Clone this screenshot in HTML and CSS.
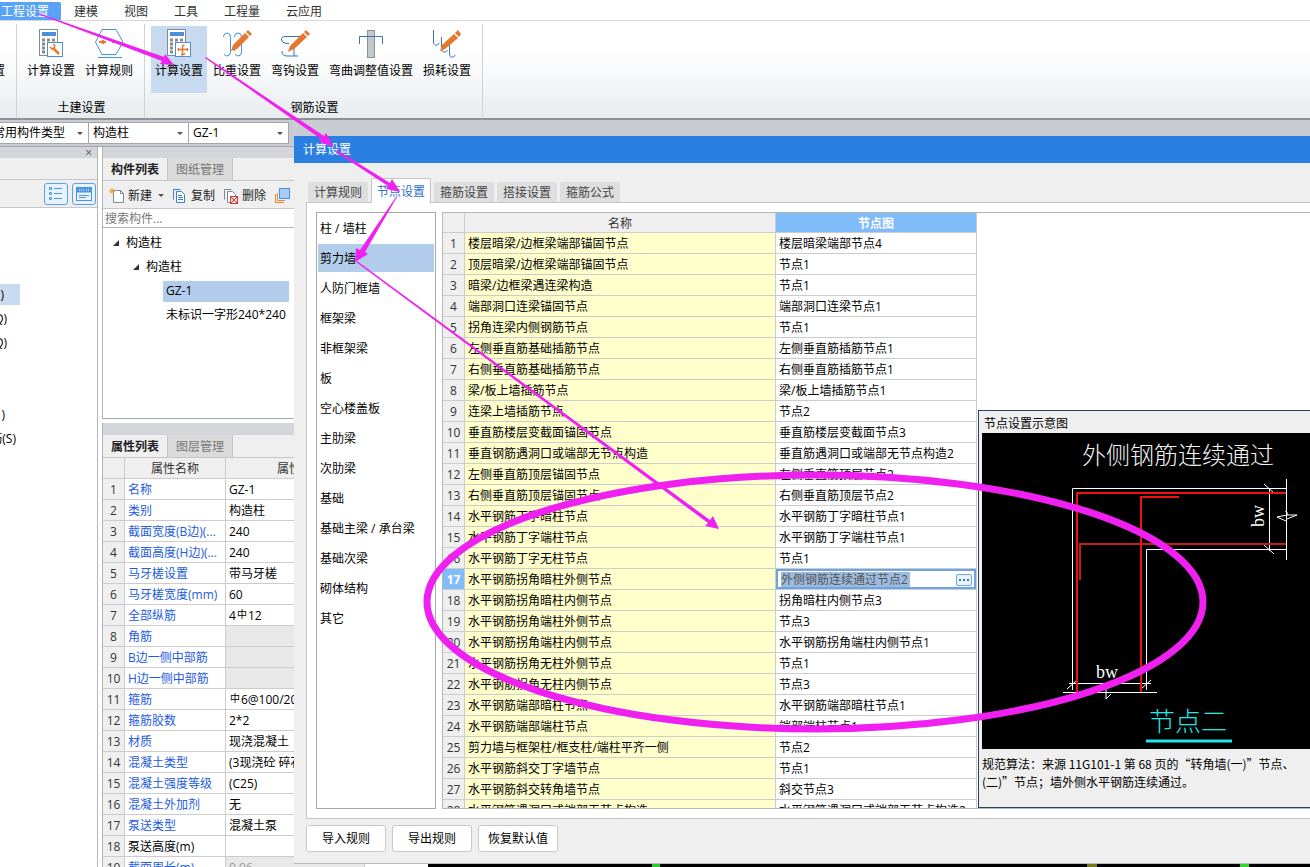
FILE: index.html
```html
<!DOCTYPE html>
<html lang="zh-CN">
<head>
    <meta charset="UTF-8">
    <meta name="viewport" content="width=device-width, initial-scale=1.0">
    <title>计算设置</title>
    <link rel="stylesheet" href="styles.css">
</head>
<body>
    <!-- 菜单 -->
    <nav class="menu">
        <a href="#" class="active">工程设置</a>
        <a href="#">建模</a>
        <a href="#">视图</a>
        <a href="#">工具</a>
        <a href="#">工程量</a>
        <a href="#">云应用</a>
    </nav>

    <!-- 功能区 -->
    <div class="ribbon">
        <div class="group group-cut">
            <div class="tools"><button class="tool">设置</button></div>
        </div>
        <div class="group">
            <div class="tools">
                <button class="tool">
                    <svg width="30" height="30" fill="none">
                        <rect x="3.500" y="0.500" width="18" height="26" fill="#fff" stroke="#7d8b99"/>
                        <rect x="6" y="3" width="14" height="4" fill="#4a8fd8"/>
                        <path d="M6 11h3m2 0h3m2 0h3M6 15h3m2 0h3m2 0h3M6 19h3m2 0h3M6 23h3" stroke="#8a8a8a" stroke-width="3"/>
                        <rect x="11.500" y="13.500" width="15" height="14" fill="#fff" stroke="#4a8fd8"/>
                        <path d="M17 19l6 6" stroke="#e8772e" stroke-width="2.500"/>
                        <path d="M14 18l2 2 2-1 1-2-2-2" stroke="#e8772e" stroke-width="1.500"/>
                    </svg>
                    计算设置
                </button>
                <button class="tool">
                    <svg width="30" height="30" fill="none">
                        <path d="M8 .5h14l7 12.500-7 12.500H8L1.500 13z" stroke="#4a8fd8"/>
                        <path d="M5 13h7M9 11v4M18 13h7" stroke="#e8772e" stroke-width="2"/>
                        <path d="M4 28.500h24" stroke="#4a8fd8"/>
                    </svg>
                    计算规则
                </button>
            </div>
            <div class="group-name">土建设置</div>
        </div>
        <div class="group">
            <div class="tools">
                <button class="tool active">
                    <svg width="30" height="30" fill="none">
                        <rect x="3.500" y="0.500" width="18" height="26" fill="#fff" stroke="#7d8b99"/>
                        <rect x="6" y="3" width="14" height="4" fill="#4a8fd8"/>
                        <path d="M6 11h3m2 0h3m2 0h3M6 15h3m2 0h3m2 0h3M6 19h3m2 0h3M6 23h3" stroke="#8a8a8a" stroke-width="3"/>
                        <rect x="11.500" y="13.500" width="15" height="14" fill="#fff" stroke="#4a8fd8"/>
                        <path d="M14 20.500h10M18.500 25v-7q0-2 2-2M14.500 19v3M23.500 19v3M17 25.500q2 1 4-1" stroke="#e8772e" stroke-width="1.500"/>
                    </svg>
                    计算设置
                </button>
                <button class="tool">
                    <svg width="30" height="30" fill="none">
                        <path d="M1.500 8q0-4 3.500-4t3.500 4v15q0 4-3.500 4-2 0-3-2M12.500 8q0-4 3.500-4t3.500 4M12.500 22v-2M19.500 14v9q0 4-3.500 4-2 0-3-2" stroke="#4a8fd8"/>
                        <path d="M9 22l2-6L23 4l4 4-12 12z" fill="#e8772e"/>
                        <path d="M24 3l2-2 4 4-2 2z" fill="#e8772e"/>
                    </svg>
                    比重设置
                </button>
                <button class="tool">
                    <svg width="30" height="30" fill="none">
                        <path d="M15 7.500H5Q1 8 1.500 11t5 3.500H9M2 22q0 5 5 5h11M14 14v13M12 7.500h8M14 14.500h6" stroke="#3a72b8"/>
                        <path d="M8 23l2-6L23 4l4 4-13 12z" fill="#e8772e"/>
                        <path d="M24 3l2-2 4 4-2 2z" fill="#e8772e"/>
                    </svg>
                    弯钩设置
                </button>
                <button class="tool tool-wide">
                    <svg width="30" height="30" fill="none">
                        <rect x="11.500" y="1.500" width="7" height="27" fill="#c3c8cc" stroke="#8a9095"/>
                        <path d="M3.500 15V7.500h23V15" stroke="#3a72b8"/>
                    </svg>
                    弯曲调整值设置
                </button>
                <button class="tool">
                    <svg width="30" height="30" fill="none">
                        <path d="M1.500 1v12q0 4 4 3l2-2M9.500 8v11q0 5 4 4l2-2M17.500 16v8q0 5 4 4l2-2" stroke="#3a72b8"/>
                        <path d="M8 22l2-6L22 5l4 4-13 11z" fill="#e8772e"/>
                        <path d="M23 4l3-3 3 4-2 3z" fill="#e8772e"/>
                    </svg>
                    损耗设置
                </button>
            </div>
            <div class="group-name">钢筋设置</div>
        </div>
    </div>

    <!-- 构件选择 -->
    <div class="selectors">
        <span class="pick pick-first"><select aria-label="构件类型"><option>常用构件类型</option></select></span>
        <span class="pick"><select aria-label="构件"><option>构造柱</option></select></span>
        <span class="pick"><select aria-label="名称"><option>GZ-1</option></select></span>
    </div>

    <div class="workspace">
        <!-- 导航栏 -->
        <aside class="navigator">
            <div class="bar"><button class="close" aria-label="关闭">×</button></div>
            <div class="caption"></div>
            <div class="view-buttons">
                <button aria-label="列表">
                    <svg width="16" height="16" fill="none" stroke="#4a96e0">
                        <path d="M1.500 1.500h2v2h-2zM1.500 6.500h2v2h-2zM1.500 11.500h2v2h-2zM6 2.500h8M6 7.500h8M6 12.500h8"/>
                    </svg>
                </button>
                <button aria-label="窗口">
                    <svg width="16" height="16" fill="none" stroke="#4a96e0">
                        <rect x="0.500" y="1.500" width="15" height="13"/>
                        <rect x="1" y="2" width="14" height="4" fill="#4a96e0"/>
                        <path d="M3 4h5M10 4h3" stroke="#fff" stroke-dasharray="1 1"/>
                        <path d="M3 9.500h10M3 11.500h7"/>
                    </svg>
                </button>
            </div>
            <ul class="nav-list">
                <li class="row-1 selected"><span>)</span></li>
                <li><span>Q)</span></li>
                <li><span>Q)</span></li>
                <li></li>
                <li></li>
                <li class="row-1"><span>)</span></li>
                <li class="row-3"><span>筋(S)</span></li>
            </ul>
        </aside>

        <div class="side">
            <!-- 构件列表 -->
            <section class="components">
                <div class="bar"></div>
                <div class="side-tabs">
                    <button class="active">构件列表</button>
                    <button>图纸管理</button>
                </div>
                <div class="toolbar">
                    <button>
                        <svg width="16" height="16" fill="none">
                            <path d="M4.500 2.500h7l3 3v9h-10z" fill="#fff" stroke="#7d8b99"/>
                            <path d="M11.500 2.500v3h3" stroke="#7d8b99"/>
                            <path d="M3 0v6M0 3h6M1 1l4 4M5 1L1 5" stroke="#f0a030"/>
                        </svg>
                        新建<i class="caret"></i>
                    </button>
                    <button>
                        <svg width="16" height="16" fill="none" stroke="#3a7fd0">
                            <path d="M1.500 11.500v-10h7"/>
                            <path d="M4.500 3.500h5l3 3v8h-8z" fill="#fff"/>
                            <path d="M6 7.500h4M6 9.500h5M6 11.500h5"/>
                        </svg>
                        复制
                    </button>
                    <button>
                        <svg width="16" height="16" fill="none">
                            <path d="M1.500 11.500v-10h7" stroke="#7d8b99"/>
                            <path d="M4.500 3.500h5l3 3v8h-8z" fill="#fff" stroke="#7d8b99"/>
                            <rect x="7.500" y="8.500" width="7" height="7" fill="#fbe0e0" stroke="#d03a3a"/>
                            <path d="M8 9l6 6M14 9l-6 6" stroke="#d03a3a"/>
                        </svg>
                        删除
                    </button>
                    <button aria-label="层间复制">
                        <svg width="16" height="16" fill="none">
                            <path d="M1.500 6v8.500H10M3.500 5v7.500H11" stroke="#e8872e"/>
                            <rect x="5.500" y="0.500" width="10" height="10" fill="#a9cdf5" stroke="#4a8fd8"/>
                        </svg>
                    </button>
                </div>
                <input class="search" type="text" aria-label="搜索构件" placeholder="搜索构件...">
                <ul class="tree">
                    <li><i class="twist"></i>构造柱</li>
                    <li class="level-2"><i class="twist"></i>构造柱</li>
                    <li class="level-3"><span class="selected">GZ-1</span></li>
                    <li class="level-3"><span>未标识一字形240*240</span></li>
                </ul>
            </section>

            <!-- 属性列表 -->
            <section class="properties">
                <div class="bar"></div>
                <div class="side-tabs">
                    <button class="active">属性列表</button>
                    <button>图层管理</button>
                </div>
                <table class="grid props">
                    <colgroup><col class="c-num"><col class="c-prop"><col class="c-val"></colgroup>
                    <thead><tr><th></th><th>属性名称</th><th>属性值</th></tr></thead>
                    <tbody>
                        <tr><th>1</th><td>名称</td><td>GZ-1</td></tr>
                        <tr><th>2</th><td>类别</td><td>构造柱</td></tr>
                        <tr><th>3</th><td>截面宽度(B边)(...</td><td>240</td></tr>
                        <tr><th>4</th><td>截面高度(H边)(...</td><td>240</td></tr>
                        <tr><th>5</th><td>马牙槎设置</td><td>带马牙槎</td></tr>
                        <tr><th>6</th><td>马牙槎宽度(mm)</td><td>60</td></tr>
                        <tr><th>7</th><td>全部纵筋</td><td>4<span class="rebar">中</span>12</td></tr>
                        <tr><th>8</th><td>角筋</td><td class="off"></td></tr>
                        <tr><th>9</th><td>B边一侧中部筋</td><td class="off"></td></tr>
                        <tr><th>10</th><td>H边一侧中部筋</td><td class="off"></td></tr>
                        <tr><th>11</th><td>箍筋</td><td><span class="rebar">中</span>6@100/200(2*2)</td></tr>
                        <tr><th>12</th><td>箍筋胶数</td><td>2*2</td></tr>
                        <tr><th>13</th><td>材质</td><td>现浇混凝土</td></tr>
                        <tr><th>14</th><td>混凝土类型</td><td>(3现浇砼 碎石)</td></tr>
                        <tr><th>15</th><td>混凝土强度等级</td><td>(C25)</td></tr>
                        <tr><th>16</th><td>混凝土外加剂</td><td>无</td></tr>
                        <tr><th>17</th><td>泵送类型</td><td>混凝土泵</td></tr>
                        <tr><th>18</th><td class="plain">泵送高度(m)</td><td></td></tr>
                        <tr><th>19</th><td>截面周长(m)</td><td class="off">0.96</td></tr>
                    </tbody>
                </table>
            </section>
        </div>
        <div class="canvas"></div>
    </div>

    <!-- 计算设置窗口 -->
    <div class="dialog" role="dialog" aria-labelledby="dialog-title">
        <h1 id="dialog-title">计算设置</h1>
        <div class="dialog-tabs">
            <button>计算规则</button>
            <button class="active">节点设置</button>
            <button>箍筋设置</button>
            <button>搭接设置</button>
            <button>箍筋公式</button>
        </div>
        <div class="pane">
            <ul class="kinds">
                <li>柱 / 墙柱</li>
                <li class="selected">剪力墙</li>
                <li>人防门框墙</li>
                <li>框架梁</li>
                <li>非框架梁</li>
                <li>板</li>
                <li>空心楼盖板</li>
                <li>主肋梁</li>
                <li>次肋梁</li>
                <li>基础</li>
                <li>基础主梁 / 承台梁</li>
                <li>基础次梁</li>
                <li>砌体结构</li>
                <li>其它</li>
            </ul>
            <div class="nodes-box">
                <table class="grid nodes">
                    <colgroup><col class="c-num"><col class="c-name"><col class="c-node"></colgroup>
                    <thead><tr><th></th><th>名称</th><th class="current">节点图</th></tr></thead>
                    <tbody>
                        <tr><th>1</th><td>楼层暗梁/边框梁端部锚固节点</td><td>楼层暗梁端部节点4</td></tr>
                        <tr><th>2</th><td>顶层暗梁/边框梁端部锚固节点</td><td>节点1</td></tr>
                        <tr><th>3</th><td>暗梁/边框梁遇连梁构造</td><td>节点1</td></tr>
                        <tr><th>4</th><td>端部洞口连梁锚固节点</td><td>端部洞口连梁节点1</td></tr>
                        <tr><th>5</th><td>拐角连梁内侧钢筋节点</td><td>节点1</td></tr>
                        <tr><th>6</th><td>左侧垂直筋基础插筋节点</td><td>左侧垂直筋插筋节点1</td></tr>
                        <tr><th>7</th><td>右侧垂直筋基础插筋节点</td><td>右侧垂直筋插筋节点1</td></tr>
                        <tr><th>8</th><td>梁/板上墙插筋节点</td><td>梁/板上墙插筋节点1</td></tr>
                        <tr><th>9</th><td>连梁上墙插筋节点</td><td>节点2</td></tr>
                        <tr><th>10</th><td>垂直筋楼层变截面锚固节点</td><td>垂直筋楼层变截面节点3</td></tr>
                        <tr><th>11</th><td>垂直钢筋遇洞口或端部无节点构造</td><td>垂直筋遇洞口或端部无节点构造2</td></tr>
                        <tr><th>12</th><td>左侧垂直筋顶层锚固节点</td><td>左侧垂直筋顶层节点2</td></tr>
                        <tr><th>13</th><td>右侧垂直筋顶层锚固节点</td><td>右侧垂直筋顶层节点2</td></tr>
                        <tr><th>14</th><td>水平钢筋丁字暗柱节点</td><td>水平钢筋丁字暗柱节点1</td></tr>
                        <tr><th>15</th><td>水平钢筋丁字端柱节点</td><td>水平钢筋丁字端柱节点1</td></tr>
                        <tr><th>16</th><td>水平钢筋丁字无柱节点</td><td>节点1</td></tr>
                        <tr>
                            <th class="current">17</th>
                            <td>水平钢筋拐角暗柱外侧节点</td>
                            <td class="editing">
                                <div class="editor">
                                    <input type="text" aria-label="节点图" value="外侧钢筋连续通过节点2">
                                    <button aria-label="选择节点图"><svg width="10" height="2"><path d="M0 1h2m2 0h2m2 0h2" stroke="#3a72b8" stroke-width="2"/></svg></button>
                                </div>
                            </td>
                        </tr>
                        <tr><th>18</th><td>水平钢筋拐角暗柱内侧节点</td><td>拐角暗柱内侧节点3</td></tr>
                        <tr><th>19</th><td>水平钢筋拐角端柱外侧节点</td><td>节点3</td></tr>
                        <tr><th>20</th><td>水平钢筋拐角端柱内侧节点</td><td>水平钢筋拐角端柱内侧节点1</td></tr>
                        <tr><th>21</th><td>水平钢筋拐角无柱外侧节点</td><td>节点1</td></tr>
                        <tr><th>22</th><td>水平钢筋拐角无柱内侧节点</td><td>节点3</td></tr>
                        <tr><th>23</th><td>水平钢筋端部暗柱节点</td><td>水平钢筋端部暗柱节点1</td></tr>
                        <tr><th>24</th><td>水平钢筋端部端柱节点</td><td>端部端柱节点1</td></tr>
                        <tr><th>25</th><td>剪力墙与框架柱/框支柱/端柱平齐一侧</td><td>节点2</td></tr>
                        <tr><th>26</th><td>水平钢筋斜交丁字墙节点</td><td>节点1</td></tr>
                        <tr><th>27</th><td>水平钢筋斜交转角墙节点</td><td>斜交节点3</td></tr>
                        <tr><th>28</th><td>水平钢筋遇洞口或端部无节点构造</td><td>水平钢筋遇洞口或端部无节点构造2</td></tr>
                    </tbody>
                </table>
                <!-- 节点示意图 -->
                <div class="preview">
                    <h2>节点设置示意图</h2>
                    <svg class="drawing" width="100%" height="316" fill="none">
                        <g stroke="#fff">
                            <path d="M90.500 257V55.500H305M164.500 257V116.500H305M304.500 46v81"/>
                            <path d="M287.500 56v62M282 51l10 9M282 112l10 9M304 79v-1l1 4-10 2 9 4M305 79v3l10 0-10 4"/>
                            <path d="M81 259.500h94M87 250.500h82M85 256l10-9M159 256l10-9M124 256v10l5-5"/>
                        </g>
                        <g stroke="#f01010" stroke-width="2">
                            <path d="M95 259V60h209M159 259V64h38"/>
                            <path d="M98 147v-36h206" stroke="#c81c1c"/>
                        </g>
                        <text class="cad-title" x="100" y="31">外侧钢筋连续通过</text>
                        <text class="cad-mark" x="114" y="245">bw</text>
                        <text class="cad-mark" transform="translate(282 94) rotate(-90)">bw</text>
                        <text class="cad-name" x="167" y="298">节点二</text>
                        <path d="M164 308h86" stroke="#20e8e8" stroke-width="3"/>
                    </svg>
                    <p>规范算法：来源 11G101-1 第 68 页的“转角墙(一)”节点、<br>(二)”节点；墙外侧水平钢筋连续通过。</p>
                </div>
            </div>
        </div>
        <div class="dialog-buttons">
            <button>导入规则</button>
            <button>导出规则</button>
            <button>恢复默认值</button>
        </div>
    </div>

    <!-- 操作标注 -->
    <svg class="marks" width="1310" height="867" fill="#f020f0">
        <path d="M38 13L164 57l1-3 9 11-14-1 2-3L38 14z"/>
        <path d="M206 57L324 136l2-3 8 14-15-5 2-3L205 58z"/>
        <path d="M337 150L390 183l2-4 8 13-14-3 2-3L336 152z"/>
        <path d="M397 197L365 252l3 2-13 8 1-14 4 2L396 197z"/>
        <path d="M357 261L710 520l3-4 6 13-14-3 3-3L356 262z"/>
        <ellipse cx="815" cy="602" rx="388" ry="127" fill="none" stroke="#f020f0" stroke-width="7"/>
    </svg>
</body>
</html>
```
FILE: styles.css
```css
* {
    box-sizing: border-box;
}
body {
    margin: 0;
    height: 100vh;
    display: flex;
    flex-direction: column;
    overflow: hidden;
    position: relative;
    background: #fff;
    color: #000;
    font-family: "Open Sans", "Noto Sans CJK SC", sans-serif;
    font-size: 12px;
    line-height: 16px;
}
button, input, select {
    font: inherit;
    color: inherit;
    margin: 0;
    padding: 0;
    border: none;
    background: none;
}
ul {
    list-style: none;
    margin: 0;
    padding: 0;
}
h1, h2, p {
    margin: 0;
    font-size: 12px;
    font-weight: normal;
}
svg {
    display: block;
    flex: none;
}

/* 菜单 */
.menu {
    display: flex;
    height: 21px;
    padding-top: 2px;
    border-bottom: 1px solid #d5d8dc;
}
.menu a {
    padding: 2px 13px 0;
    color: #333;
    text-decoration: none;
}
.menu a.active {
    padding: 2px 12px 0 1px;
    background: #58a3f5;
    border-radius: 0 2px 0 0;
    color: #fff;
}

/* 功能区 */
.ribbon {
    display: flex;
    height: 99px;
    padding: 3px 0 1px;
    background: linear-gradient(#fff 30%, #e8ecef);
    border-bottom: 2px solid #8e9194;
}
.group {
    display: flex;
    flex-direction: column;
    padding: 2px 6px 0;
    border-right: 1px solid #cfd3d6;
}
.group:nth-child(n+2) {
    padding-right: 7px;
}
.group-cut {
    width: 17px;
    padding: 2px 11px 0 0;
    overflow: hidden;
}
.group-cut .tools {
    justify-content: flex-end;
}
.tools {
    display: flex;
    gap: 2px;
}
.tool {
    display: flex;
    flex: none;
    flex-direction: column;
    align-items: center;
    justify-content: flex-end;
    gap: 4px;
    width: 56px;
    height: 67px;
    padding-bottom: 14px;
}
.group-cut .tool {
    width: auto;
}
.tool-wide {
    width: 92px;
}
.tool.active {
    background: #c8daf0;
}
.group-name {
    margin-top: 7px;
    padding-left: 3px;
    text-align: center;
}

/* 构件选择 */
.selectors {
    display: flex;
    height: 27px;
    padding: 2px 0;
    background: #c9ccd2;
    border-bottom: 1px solid #a4a6aa;
}
.pick {
    position: relative;
    display: flex;
    width: 100px;
    height: 22px;
    background: #fff;
    border: 1px solid #a4a6aa;
    border-left: none;
}
.pick-first {
    width: 89px;
    justify-content: flex-end;
    overflow: hidden;
}
.pick select {
    flex: none;
    width: 99px;
    padding: 0 4px;
    appearance: none;
}
.pick::after {
    content: "";
    position: absolute;
    right: 5px;
    top: 9px;
    border: 3px solid transparent;
    border-top-color: #555;
    border-bottom: none;
}

.workspace {
    flex: 1;
    display: flex;
    min-height: 0;
}
.bar {
    height: 11px;
    background: #d3d5da;
}

/* 导航栏 */
.navigator {
    width: 98px;
    border-right: 1px solid #b4b6ba;
}
.navigator .bar {
    display: flex;
    justify-content: flex-end;
    padding-right: 5px;
}
.close {
    color: #555;
    line-height: 11px;
}
.caption {
    height: 22px;
    background: #efefef;
    border-bottom: 1px solid #c4c6ca;
}
.view-buttons {
    display: flex;
    justify-content: flex-end;
    gap: 4px;
    height: 28px;
    padding: 3px 1px;
    background: #efefef;
    border-bottom: 1px solid #c4c6ca;
}
.view-buttons button {
    display: flex;
    align-items: center;
    justify-content: center;
    width: 24px;
    height: 22px;
    border: 1px solid #58a0ec;
    border-radius: 3px;
    background: #e8f2fd;
}
.nav-list {
    padding-top: 76px;
}
.nav-list li {
    display: flex;
    justify-content: flex-end;
    width: 7px;
    height: 24px;
    line-height: 24px;
    overflow: hidden;
    white-space: nowrap;
}
.nav-list .row-1 {
    width: 5px;
}
.nav-list .row-3 {
    width: 16px;
}
.nav-list li.selected {
    width: 20px;
    height: 21px;
    margin-bottom: 2px;
    padding-right: 16px;
    background: #c8daf0;
    line-height: 21px;
}

/* 构件列表与属性列表 */
.side {
    display: flex;
    flex-direction: column;
    gap: 4px;
    width: 263px;
    margin-left: 4px;
    overflow: hidden;
}
.components, .properties {
    border-left: 1px solid #b4b6ba;
}
.components {
    display: flex;
    flex-direction: column;
    height: 272px;
    flex: none;
    border-bottom: 1px solid #a8aaac;
}
.properties .bar {
    height: 12px;
}
.side-tabs {
    display: flex;
    height: 23px;
    background: #efefef;
    border-bottom: 1px solid #c4c6ca;
}
.side-tabs button {
    width: 65px;
    padding-top: 2px;
    background: #dadada;
    border-right: 1px solid #c4c6ca;
    color: #777;
}
.side-tabs button.active {
    background: #efefef;
    color: #222;
    font-weight: bold;
}
.toolbar {
    display: flex;
    align-items: center;
    gap: 8px;
    height: 28px;
    padding: 2px 0 0 6px;
    background: #efefef;
    border-bottom: 1px solid #c4c6ca;
}
.toolbar button {
    display: flex;
    align-items: center;
    gap: 3px;
    color: #222;
}
.caret {
    margin-left: 3px;
    border: 3px solid transparent;
    border-top-color: #555;
    border-bottom: none;
}
.search {
    height: 19px;
    padding: 0 2px;
    border-bottom: 1px solid #b4b6ba;
}
.search::placeholder {
    color: #777;
}
.tree {
    padding-top: 3px;
}
.tree li {
    display: flex;
    align-items: center;
    gap: 7px;
    height: 24px;
    padding-left: 10px;
}
.tree .level-2 {
    padding-left: 30px;
}
.tree .level-3 {
    padding-left: 60px;
}
.tree span {
    width: 126px;
    padding: 2px 3px 3px;
    white-space: nowrap;
}
.tree .selected {
    background: #b2cdec;
}
.twist {
    border-left: 6px solid transparent;
    border-bottom: 6px solid #333;
}

/* 表格 */
.grid {
    table-layout: fixed;
    border-collapse: separate;
    border-spacing: 0;
}
.grid th, .grid td {
    height: 21px;
    padding: 2px 3px 0;
    border-right: 1px solid #cccccc;
    border-bottom: 1px solid #cccccc;
    line-height: 16px;
    text-align: left;
    font-weight: normal;
    white-space: nowrap;
    overflow: hidden;
}
.grid th {
    padding: 2px 0 0;
    background: #efefef;
    color: #333;
    text-align: center;
}
.c-num {
    width: 22px;
}
.c-prop {
    width: 101px;
}
.c-val {
    width: 139px;
}
.c-name {
    width: 311px;
}
.c-node {
    width: 201px;
}
.props {
    width: 262px;
}
.props td:nth-child(2) {
    color: #1d5be0;
}
.props td.plain {
    color: #000;
}
.props td.off {
    background: #e8e8e8;
    color: #999;
}
.rebar {
    margin: 0 1px;
    font-size: 10px;
    vertical-align: 2px;
    line-height: 10px;
}
.canvas {
    flex: 1;
    margin-left: 63px;
    background: linear-gradient(90deg, #000 224px, #30c830 224px 232px, #000 232px 659px, #77771c 659px 669px, #000 669px 812px, #30d830 812px 821px, #000 821px);
}

/* 计算设置窗口 */
.dialog {
    position: absolute;
    left: 294px;
    right: 0;
    top: 136px;
    bottom: 3px;
    display: flex;
    flex-direction: column;
    background: #efefef;
    border-bottom: 1px solid #b4b6ba;
}
.dialog h1 {
    height: 27px;
    padding-left: 9px;
    background: #2b7fe0;
    color: #fff;
    line-height: 27px;
}
.dialog-tabs {
    display: flex;
    align-items: flex-end;
    gap: 3px;
    height: 40px;
    padding-left: 14px;
    z-index: 1;
}
.dialog-tabs button {
    width: 60px;
    height: 20px;
    margin-bottom: 1px;
    padding-top: 2px;
    background: #dedede;
    border-radius: 2px 2px 0 0;
    color: #444;
}
.dialog-tabs button.active {
    height: 25px;
    margin-bottom: 0;
    background: #fff;
    border: 1px solid #c4c6ca;
    border-bottom: none;
    color: #2b6fd0;
}
.pane {
    flex: 1;
    display: flex;
    gap: 6px;
    min-height: 0;
    margin: -1px 0 0 12px;
    padding: 9px 0 9px 9px;
    background: #fff;
    border: 1px solid #c4c6ca;
    border-right: none;
}
.kinds {
    flex: none;
    width: 120px;
    padding: 1px;
    border: 1px solid #a8aaac;
}
.kinds li {
    height: 28px;
    margin-bottom: 2px;
    padding-left: 2px;
    line-height: 30px;
}
.kinds .selected {
    background: #b2cdec;
}
.nodes-box {
    flex: 1;
    display: flex;
    min-width: 0;
    gap: 1px;
    overflow: hidden;
    border: 1px solid #b4b6ba;
    border-right: none;
}
.nodes {
    flex: none;
    width: 534px;
    align-self: flex-start;
}
.nodes thead th {
    height: 20px;
}
.nodes td:nth-child(2) {
    background: #ffffcc;
}
.nodes th.current {
    background: #80bbfa;
    color: #fff;
    font-weight: bold;
}
.nodes td.editing {
    padding: 0;
}
.editor {
    display: flex;
    align-items: center;
    justify-content: space-between;
    height: 20px;
    padding: 1px 2px 0 3px;
    border: 2px solid #6ba5e7;
}
.editor input {
    width: 129px;
    height: 15px;
    background: #9dbbe0;
    color: #555;
}
.editor button {
    display: flex;
    align-items: center;
    justify-content: center;
    width: 16px;
    height: 12px;
    border: 1px solid #6ba5e7;
    border-radius: 2px;
    background: #eaf3fd;
}

/* 节点示意图 */
.preview {
    flex: 1;
    align-self: flex-end;
    min-width: 0;
    height: 398px;
    padding-left: 3px;
    background: #efefef;
    border: 1px solid #2a3f66;
    border-right: none;
    overflow: hidden;
}
.preview h2 {
    height: 22px;
    padding: 5px 2px 0;
}
.drawing {
    background: #000;
}
.preview p {
    padding-top: 6px;
    font-family: "Noto Sans CJK SC", sans-serif;
    line-height: 18px;
    white-space: nowrap;
}
.cad-title, .cad-name {
    fill: #f4f4f4;
    font-family: "Noto Sans CJK SC", sans-serif;
    font-size: 24px;
    font-weight: 300;
}
.cad-name {
    fill: #20e8e8;
    font-size: 26px;
}
.cad-mark {
    fill: #fff;
    font-family: "Liberation Serif", serif;
    font-size: 18px;
}

.dialog-buttons {
    display: flex;
    gap: 6px;
    padding: 6px 12px 11px;
}
.dialog-buttons button {
    width: 80px;
    height: 27px;
    padding-top: 1px;
    background: #fff;
    border: 1px solid #c8cacc;
    border-radius: 3px;
}

/* 操作标注 */
.marks {
    position: absolute;
    left: 0;
    top: 0;
    z-index: 2;
    pointer-events: none;
}
```
